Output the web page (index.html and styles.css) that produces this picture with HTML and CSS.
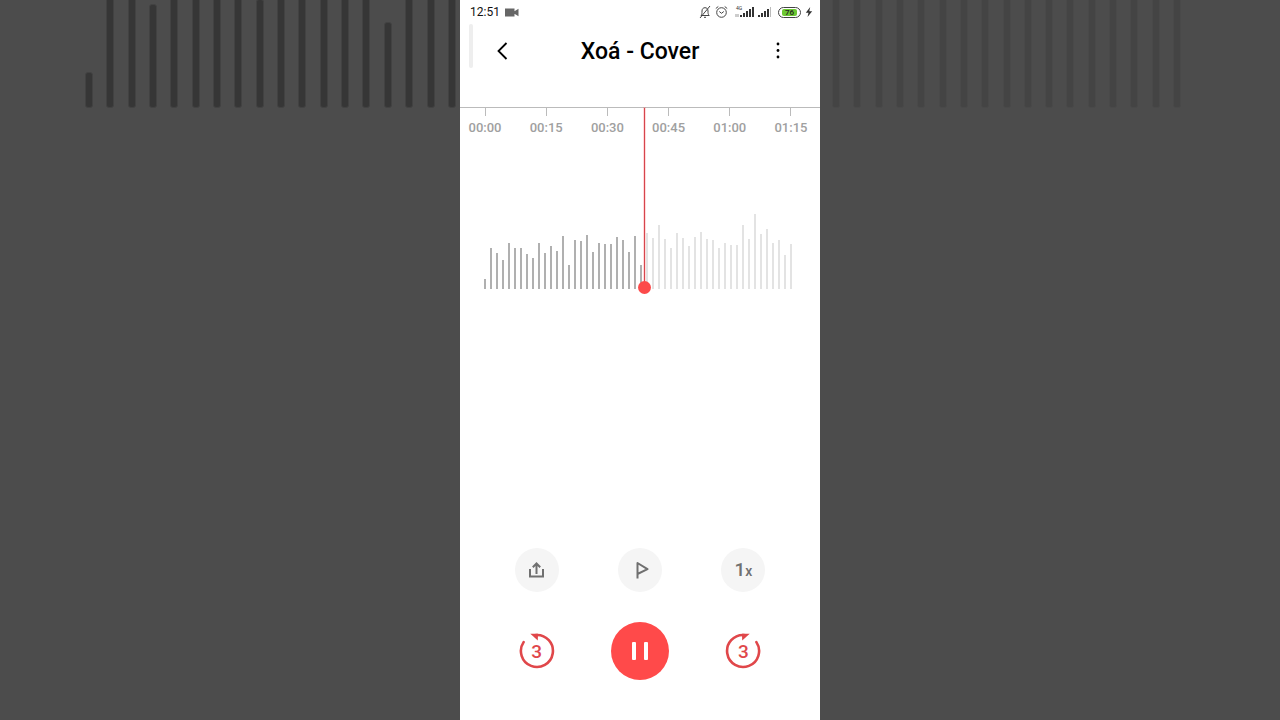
FILE: index.html
```html
<!DOCTYPE html>
<html lang="vi">
<head>
    <meta charset="UTF-8">
    <meta name="viewport" content="width=device-width, initial-scale=1.0">
    <title>Xoá - Cover</title>
    <link rel="stylesheet" href="styles.css">
</head>
<body>
    <div class="backdrop backdrop-left" id="backdrop-left"></div>

    <main class="phone">
        <div class="status-bar">
            <span class="clock">12:51</span>
            <svg class="camera" width="14" height="9" viewBox="0 0 14 9"><path d="M0 .5h9.500v8H0zM9 3.500 13.500 .8v7.400L9 5.500z" fill="#666"/></svg>
            <div class="status-icons">
                <svg width="12" height="14" viewBox="0 0 12 14" fill="none" stroke="#444" stroke-width="1"><path d="M2 10.500c1-1.200 1-2.500 1-4.500 0-2 1.200-3.300 3-3.300S9 4 9 6c0 2 0 3.300 1.200 4.500zM5 12.300h2M11 1 1 13"/></svg>
                <svg width="13" height="14" viewBox="0 0 13 14" fill="none" stroke="#444" stroke-width="1"><circle cx="6.500" cy="7.500" r="4.800"/><path d="M4.300 6.500 6.500 8.300 8.800 6.500M.8 3.500 3.300 1.500M12.200 3.500 9.700 1.500"/></svg>
                <div class="mobile">
                    <span class="network">4G</span>
                    <svg width="19" height="12" viewBox="0 0 19 12" fill="#333"><path d="M.5 8h1v3h-1zM2.500 8h1v3h-1z" fill="#999"/><path d="M5 9h2v2H5zM8 7h2v4H8zM11 5h2v6h-2zM14 3h2v8h-2zM17 1h2v10h-2z"/></svg>
                </div>
                <svg class="signal" width="14" height="12" viewBox="0 0 14 12" fill="#333"><path d="M0 9h2v2H0zM3 7h2v4H3zM6 5h2v6H6zM9 3h2v8H9z"/><path d="M12 1h1v10h-1z" fill="#bbb"/></svg>
                <div class="battery"><span>76</span></div>
                <svg width="8" height="12" viewBox="0 0 8 12"><path d="M5.200 1 .8 6.800h2.700L2.500 11l4.700-5.800H4.300z" fill="#333"/></svg>
            </div>
        </div>

        <header class="title-bar">
            <button class="icon-btn" aria-label="Back">
                <svg width="24" height="24" viewBox="0 0 24 24" fill="none" stroke="#000" stroke-width="1.800"><path d="M16.500 4 8.500 12l8 8"/></svg>
            </button>
            <h1>Xoá - Cover</h1>
            <button class="icon-btn" aria-label="More">
                <svg width="24" height="24" viewBox="0 0 24 24" fill="#000"><circle cx="12" cy="5" r="1.400"/><circle cx="12" cy="11.500" r="1.400"/><circle cx="12" cy="18" r="1.400"/></svg>
            </button>
            <div class="edge-handle"></div>
        </header>

        <section class="timeline">
            <div class="ruler">
                <span>00:00</span>
                <span>00:15</span>
                <span>00:30</span>
                <span>00:45</span>
                <span>01:00</span>
                <span>01:15</span>
            </div>
            <div class="track">
                <div class="waveform" id="waveform"></div>
                <div class="playhead"></div>
            </div>
        </section>

        <section class="controls">
            <button class="round-btn" aria-label="Share">
                <svg width="20" height="20" viewBox="0 0 20 20" fill="none" stroke="#707070" stroke-width="2"><path d="M3 9v7.500h13V9M9.500 14V4M5.800 7.300 9.500 3.500l3.700 3.800"/></svg>
            </button>
            <button class="round-btn" aria-label="Flag">
                <svg width="20" height="20" viewBox="0 0 20 20" fill="none" stroke="#707070" stroke-width="2" stroke-linejoin="round"><path d="M7.500 18.500V3l10 6.200-10 4.800"/></svg>
            </button>
            <button class="round-btn speed" aria-label="Playback speed">1<small>x</small></button>
            <button class="skip-btn" aria-label="Back 3 seconds">
                <svg width="36" height="36" viewBox="0 0 36 36"><path d="M4.600 9.100A16 16 0 1 0 17 2" fill="none" stroke="#e0474a" stroke-width="2.600" stroke-linecap="round"/><path d="M11.300.8H19l-.2 6.600z" fill="#e0474a"/></svg>
                <span>3</span>
            </button>
            <button class="pause-btn" aria-label="Pause">
                <svg width="20" height="20" viewBox="0 0 20 20" fill="#fff"><rect x="2" y="1" width="4" height="18" rx="1"/><rect x="14" y="1" width="4" height="18" rx="1"/></svg>
            </button>
            <button class="skip-btn" aria-label="Forward 3 seconds">
                <svg width="36" height="36" viewBox="0 0 36 36"><path d="M31.400 9.100A16 16 0 1 1 19 2" fill="none" stroke="#e0474a" stroke-width="2.600" stroke-linecap="round"/><path d="M24.700.8H17l.2 6.600z" fill="#e0474a"/></svg>
                <span>3</span>
            </button>
        </section>
    </main>

    <div class="backdrop backdrop-right" id="backdrop-right"></div>

    <script>
        const played = [10, 41, 36, 29, 46, 41, 41, 35, 31, 46, 36, 43, 38, 53, 24, 49, 48, 54, 37, 46, 45, 45, 52, 49, 37, 53, 24];
        const upcoming = [56, 51, 64, 50, 41, 56, 51, 43, 52, 57, 50, 49, 41, 46, 44, 44, 64, 50, 75, 55, 60, 46, 49, 34, 45];

        function addBars(id, heights, className) {
            const parent = document.getElementById(id);
            heights.forEach(height => {
                const bar = document.createElement('i');
                bar.className = className;
                bar.style.height = height + 'px';
                parent.appendChild(bar);
            });
        }

        addBars('waveform', played, 'bar');
        addBars('waveform', upcoming, 'bar upcoming');

        // Enlarged waveform behind the phone, cut off at the top of the window
        addBars('backdrop-left', [36, 150, 130, 104, 150, 150, 150, 130, 109, 150, 130, 150, 140, 150, 86, 150, 150, 150], 'big-bar');
        addBars('backdrop-right', new Array(17).fill(150), 'big-bar');
    </script>
</body>
</html>
```
FILE: styles.css
```css
* {
    box-sizing: border-box;
}

body {
    display: grid;
    grid-template-columns: minmax(0, 1fr) 360px minmax(0, 1fr);
    min-height: 100vh;
    margin: 0;
    background-color: #4c4c4c;
    font-family: Roboto, Arial, sans-serif;
}

button {
    display: grid;
    place-items: center;
    padding: 0;
    border: 0;
    background: none;
    font-family: inherit;
    cursor: pointer;
}

/* backdrop */
.backdrop {
    display: flex;
    justify-content: space-between;
    align-items: flex-end;
    height: 108px;
    overflow: hidden;
}

.backdrop-left {
    padding: 0 4px 0 85px;
}

.backdrop-right {
    padding: 0 99px 0 12px;
}

.big-bar {
    flex: none;
    width: 8px;
    border: 1px solid #424242;
    border-radius: 3px;
    background-color: #363636;
}

.backdrop-right .big-bar {
    border-color: #494949;
    background-color: #444;
}

/* phone */
.phone {
    display: flex;
    flex-direction: column;
    background-color: #fff;
}

.status-bar {
    display: flex;
    align-items: center;
    height: 24px;
    padding: 0 7px 0 10px;
}

.clock {
    font-size: 12px;
    color: #111;
}

.camera {
    margin-left: 5px;
}

.status-icons {
    display: flex;
    align-items: center;
    gap: 4px;
    margin-left: auto;
}

.mobile {
    position: relative;
    display: flex;
    margin-left: 3px;
}

.network {
    position: absolute;
    top: -1px;
    left: 1px;
    font-size: 5px;
    line-height: 6px;
    color: #333;
}

.battery {
    width: 23px;
    height: 11px;
    margin-left: 2px;
    padding: 1px 3px;
    border: 1px solid #444;
    border-radius: 6px;
}

.battery span {
    display: block;
    border-radius: 2px;
    background-color: #6cc832;
    font-size: 8px;
    font-weight: 500;
    line-height: 7px;
    text-align: center;
    color: #222;
}

.title-bar {
    position: relative;
    display: flex;
    justify-content: space-between;
    align-items: center;
    height: 83px;
    padding: 0 30px 29px;
}

.title-bar h1 {
    margin: 0;
    padding-top: 2px;
    font-size: 23px;
    font-weight: 500;
    line-height: 28px;
    color: #000;
}

.edge-handle {
    position: absolute;
    top: 0;
    left: 9px;
    width: 4px;
    height: 44px;
    border-radius: 2px;
    background-color: #eee;
}

/* timeline */
.timeline {
    position: relative;
    border-top: 1px solid #bbb;
}

.ruler {
    display: flex;
    justify-content: space-between;
    padding: 0 9px 0 5px;
}

.ruler span {
    width: 40px;
    font-size: 13px;
    font-weight: 500;
    line-height: 16px;
    text-align: center;
    color: #a0a0a0;
}

.ruler span::before {
    content: "";
    display: block;
    width: 1px;
    height: 8px;
    margin: 0 auto 4px;
    background-color: #bbb;
}

.track {
    padding: 0 28px 0 24px;
}

.waveform {
    display: flex;
    justify-content: space-between;
    align-items: flex-end;
    height: 153px;
}

.bar {
    width: 2px;
    background-color: #b0b0b0;
}

.bar.upcoming {
    background-color: #e3e3e3;
}

.playhead {
    position: absolute;
    top: 0;
    left: 184px;
    width: 1px;
    height: 180px;
    background-color: #d6454d;
    box-shadow: 0 0 0 1px rgba(255, 74, 74, 0.2);
}

.playhead::after {
    content: "";
    position: absolute;
    bottom: -6px;
    left: -6px;
    width: 13px;
    height: 13px;
    border-radius: 50%;
    background-color: #fc4a4a;
}

/* controls */
.controls {
    display: grid;
    grid-template-columns: repeat(3, 1fr);
    place-items: center;
    row-gap: 30px;
    margin-top: auto;
    padding: 0 25px 40px;
}

.round-btn {
    width: 44px;
    height: 44px;
    border-radius: 50%;
    background-color: #f5f5f5;
    color: #707070;
}

.speed {
    display: flex;
    justify-content: center;
    align-items: baseline;
    font-size: 19px;
    font-weight: 500;
    line-height: 44px;
}

.speed small {
    font-size: 14px;
}

.skip-btn {
    color: #e0474a;
    font-size: 19px;
    font-weight: 500;
}

.skip-btn svg,
.skip-btn span {
    grid-area: 1 / 1;
}

.pause-btn {
    width: 58px;
    height: 58px;
    border-radius: 50%;
    background-color: #ff4a4a;
}
```
